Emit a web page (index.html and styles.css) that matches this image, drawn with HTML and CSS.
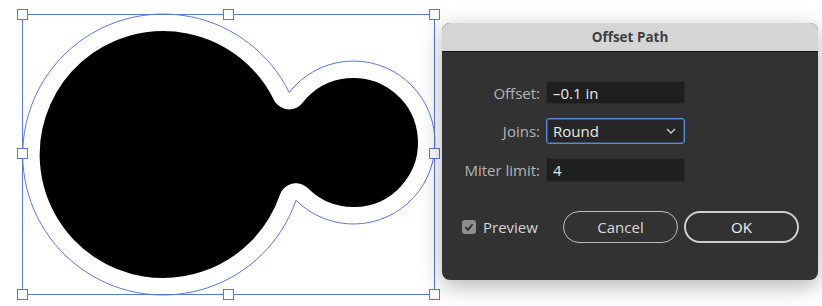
FILE: index.html
```html
<!DOCTYPE html>
<html lang="en">
<head>
    <meta charset="UTF-8">
    <title>Offset Path</title>
    <link rel="stylesheet" href="styles.css">
</head>
<body>
    <div class="workspace">
        <svg class="artboard" width="442" height="306" viewBox="0 0 442 306">
            <!-- original path filled, then eroded by a white round-joined stroke -->
            <path class="shape" d="M289.2 92.4 A140.5 140.5 0 1 0 296 200.3 A81.5 81.5 0 1 0 289.2 92.4 Z"/>
            <path class="outline" d="M289.2 92.4 A140.5 140.5 0 1 0 296 200.3 A81.5 81.5 0 1 0 289.2 92.4 Z"/>
            <rect class="bounds" x="22.5" y="14.5" width="412" height="280"/>
            <rect class="handle" x="17.5" y="9.5" width="10" height="10"/>
            <rect class="handle" x="223.5" y="9.5" width="10" height="10"/>
            <rect class="handle" x="429.5" y="9.5" width="10" height="10"/>
            <rect class="handle" x="17.5" y="148.5" width="10" height="10"/>
            <rect class="handle" x="429.5" y="148.5" width="10" height="10"/>
            <rect class="handle" x="17.5" y="289.5" width="10" height="10"/>
            <rect class="handle" x="223.5" y="289.5" width="10" height="10"/>
            <rect class="handle" x="429.5" y="289.5" width="10" height="10"/>
        </svg>

        <div class="dialog">
            <div class="dialog-title">Offset Path</div>
            <div class="dialog-body">
                <div class="fields">
                    <label>Offset:</label>
                    <div class="field">&ndash;0.1 in</div>
                    <label>Joins:</label>
                    <div class="field select">
                        <span>Round</span>
                        <svg width="10" height="6" viewBox="0 0 10 6"><polyline points="1,1 5,5 9,1" fill="none" stroke="#d0d0d0" stroke-width="1.3"/></svg>
                    </div>
                    <label>Miter limit:</label>
                    <div class="field">4</div>
                </div>
                <div class="actions">
                    <label class="check">
                        <span class="box"><svg width="14" height="14" viewBox="0 0 14 14"><polyline points="3.5,7.2 6,9.8 10.5,4.2" fill="none" stroke="#2c2c2c" stroke-width="1.8"/></svg></span>
                        Preview
                    </label>
                    <div class="buttons">
                        <button class="btn">Cancel</button>
                        <button class="btn btn-default">OK</button>
                    </div>
                </div>
            </div>
        </div>
    </div>
</body>
</html>
```

FILE: styles.css
```css
body {
    margin: 0;
    padding: 0;
    background-color: white;
    font-family: "Open Sans", Arial, sans-serif;
}
.workspace {
    display: flex;
    align-items: flex-start;
    width: 822px;
    height: 306px;
    overflow: hidden;
}
.artboard {
    display: block;
    flex: none;
}
.shape {
    fill: black;
    stroke: white;
    stroke-width: 34;
    stroke-linejoin: round;
}
.outline, .bounds {
    fill: none;
    stroke: #5a77dc;
    stroke-width: 1;
}
.handle {
    fill: white;
    stroke: #5a77dc;
    stroke-width: 1;
}
.dialog {
    flex: none;
    width: 376px;
    height: 257px;
    margin-top: 23px;
    border-radius: 8px;
    overflow: hidden;
    background-color: #323232;
    box-shadow: 0 6px 22px rgba(0, 0, 0, 0.3);
}
.dialog-title {
    height: 28px;
    line-height: 28px;
    background-color: #d5d5d5;
    border-bottom: 1px solid #111;
    color: #3e3e3e;
    font-size: 13.5px;
    font-weight: bold;
    text-align: center;
}
.dialog-body {
    padding-top: 29px;
}
.fields {
    display: grid;
    grid-template-columns: 98px 139px;
    grid-template-rows: 23px 26px 24px;
    column-gap: 6px;
    row-gap: 14px;
}
.fields label {
    align-self: center;
    text-align: right;
    color: #b3b3b3;
    font-size: 15px;
}
.field {
    box-sizing: border-box;
    display: flex;
    align-items: center;
    padding-left: 6px;
    background-color: #1f1f1f;
    border: 1px solid #2b2b2b;
    border-radius: 2px;
    color: #e8e8e8;
    font-size: 15px;
}
.select {
    justify-content: space-between;
    padding-right: 8px;
    background-color: #262626;
    border: 1px solid #5a8ad8;
    border-radius: 3px;
    box-shadow: inset 0 0 0 1px rgba(70, 120, 200, 0.55);
}
.actions {
    display: flex;
    align-items: center;
    margin-top: 29px;
    padding: 0 19px 0 20px;
}
.check {
    display: flex;
    align-items: center;
    gap: 7px;
    color: #d4d4d4;
    font-size: 15px;
}
.box {
    display: block;
    width: 14px;
    height: 14px;
    border-radius: 3px;
    background-color: #8e8e8e;
}
.box svg {
    display: block;
}
.buttons {
    display: flex;
    gap: 6px;
    margin-left: auto;
}
.btn {
    box-sizing: border-box;
    width: 115px;
    height: 32px;
    border: 1px solid #bdbdbd;
    border-radius: 16px;
    background: transparent;
    color: #dadada;
    font-family: "Open Sans", Arial, sans-serif;
    font-size: 15px;
    padding: 0;
}
.btn-default {
    border: 2px solid #cfcfcf;
    color: #f2f2f2;
}
```
